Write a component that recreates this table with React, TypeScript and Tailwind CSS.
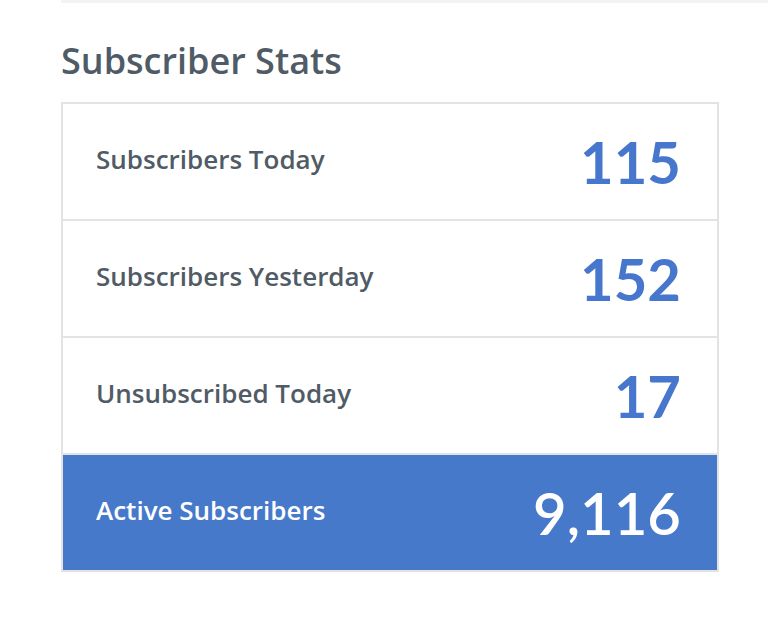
const stats = [
  { label: 'Subscribers Today', value: '115' },
  { label: 'Subscribers Yesterday', value: '152' },
  { label: 'Unsubscribed Today', value: '17' },
];

export default function App() {
  return (
    <div className="min-h-[630px] w-[768px] bg-white font-['Open_Sans','Noto_Sans',sans-serif]">
      <div className="ml-[61px] h-[3px] bg-[#f3f3f3]" />
      <div className="pl-[61px] pr-[49px] pt-[36px]">
        <h2 className="text-[36px] font-semibold leading-[44px] text-[#4f5b66]">Subscriber Stats</h2>
        <div className="mt-[19px] border-2 border-[#e3e3e3]">
          {stats.map((s) => (
            <div
              key={s.label}
              className="flex h-[117px] items-center justify-between border-b-2 border-[#e3e3e3] pl-[33px] pr-[36px]"
            >
              <span className="-mt-[4px] text-[26px] font-semibold text-[#505b65]">{s.label}</span>
              <span className="font-['Lato',sans-serif] text-[58px] font-bold text-[#4677cc]">{s.value}</span>
            </div>
          ))}
          <div className="flex h-[115px] items-center justify-between bg-[#4779cb] pl-[33px] pr-[36px]">
            <span className="-mt-[4px] text-[26px] font-semibold text-white">Active Subscribers</span>
            <span className="font-['Lato',sans-serif] text-[58px] font-semibold text-white">9,116</span>
          </div>
        </div>
      </div>
    </div>
  );
}
